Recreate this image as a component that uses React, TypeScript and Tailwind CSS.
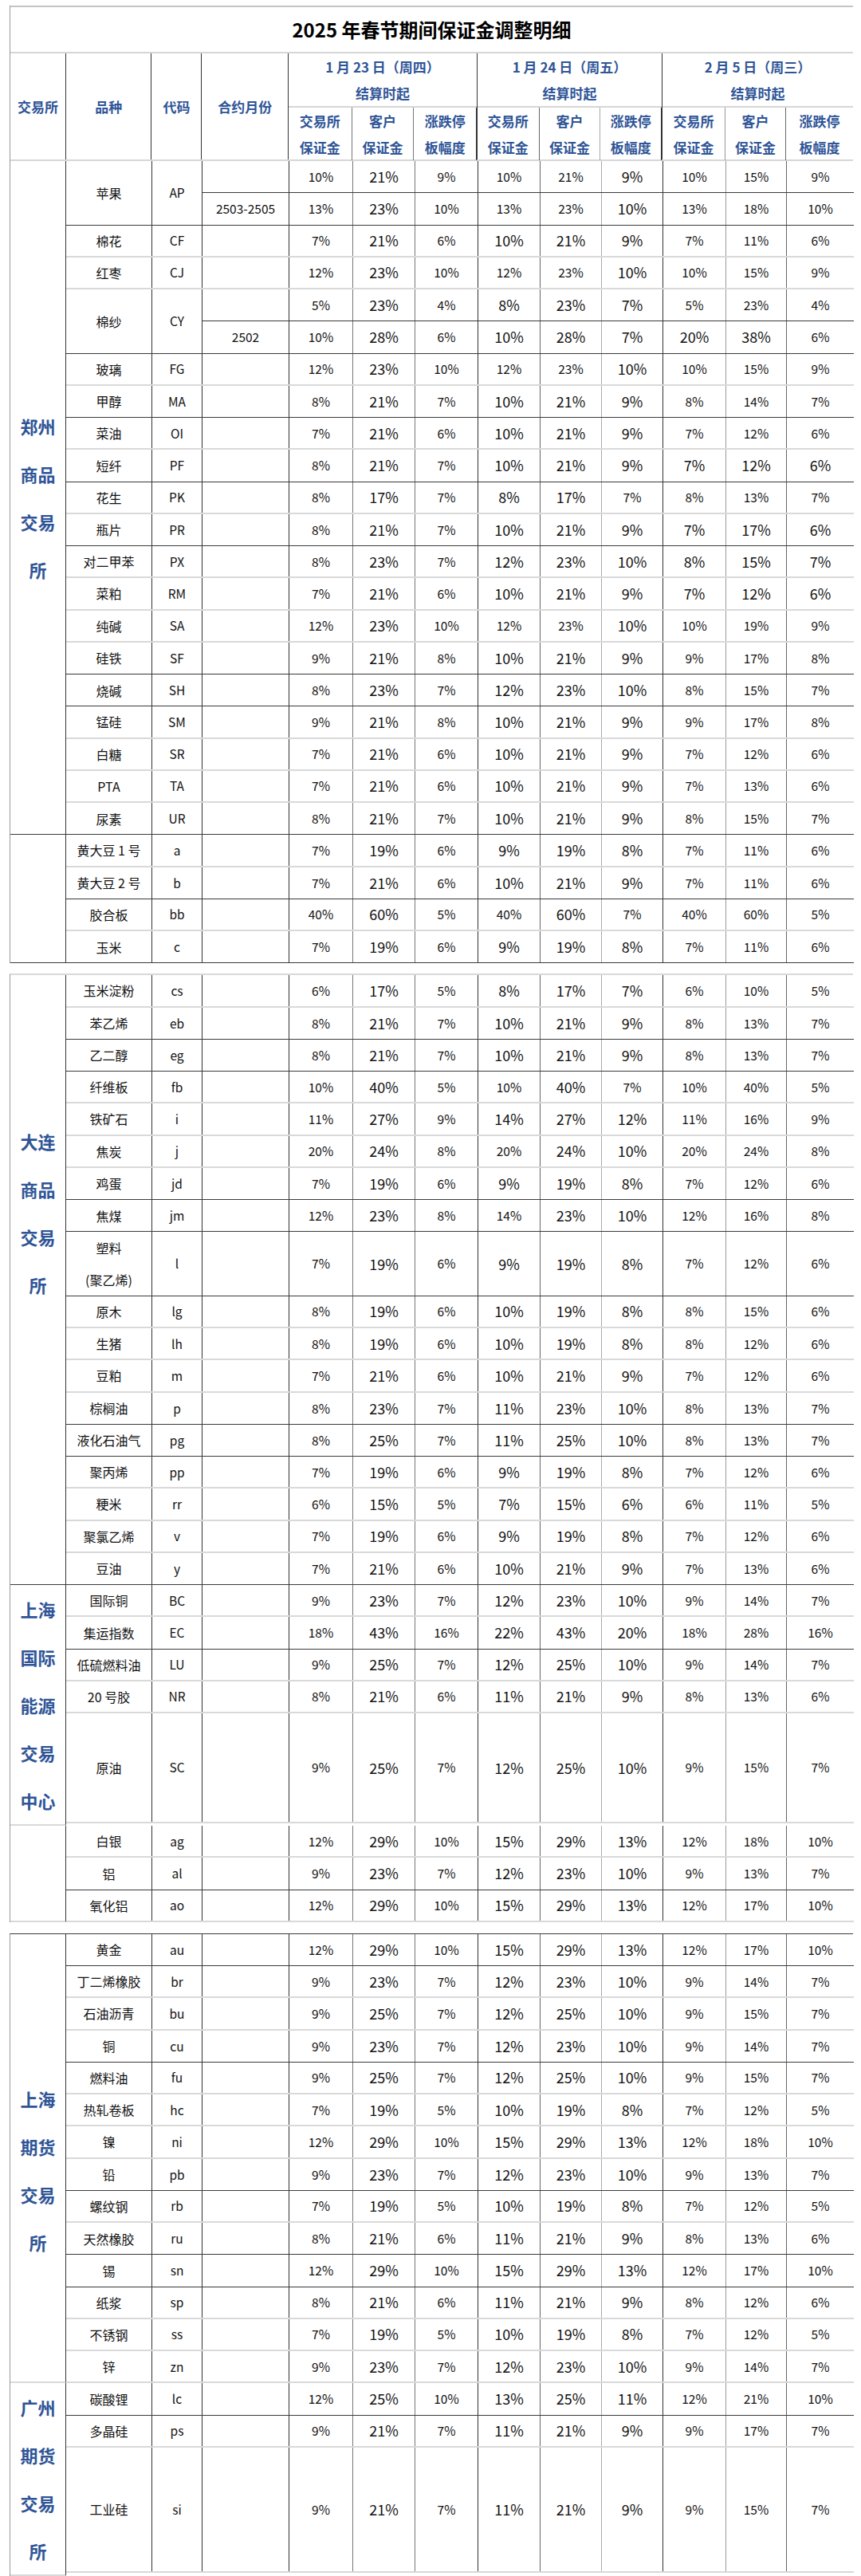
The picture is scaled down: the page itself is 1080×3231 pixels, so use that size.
import React from 'react';

type Line = 'd' | 'l';
type Sub = { month?: string; v: number[]; m?: string; line?: Line };
type Item = { name: string; code: string; subs: Sub[]; line: Line; h?: string };
type Section = { label: string[]; pad?: string; items: Item[] };

const DEF = 'sLsLLLsss';

const lineCls: Record<Line, string> = {
    d: 'border-b border-b-[#3a3a3a]',
    l: 'border-b-2 border-b-[#d9d9d9]',
};

// widths of the 9 value columns and the line on their right side
const valCols = [
    'w-[80px] border-r border-r-[#777]',
    'w-[78px] border-r border-r-[#777]',
    'w-[79px] border-r border-r-[#333]',
    'w-[78px] border-r border-r-[#666]',
    'w-[77px] border-r border-r-[#aaa]',
    'w-[77px] border-r border-r-[#333]',
    'w-[79px] border-r border-r-[#999]',
    'w-[76px] border-r border-r-[#666]',
    'w-[84px]',
];

const one = (name: string, code: string, v: number[], line: Line, m?: string): Item => ({
    name,
    code,
    subs: [{ v, m }],
    line,
});

const zhengzhou: Section = {
    label: ['郑州', '商品', '交易', '所'],
    items: [
        {
            name: '苹果',
            code: 'AP',
            line: 'd',
            h: 'h-[80.5px]',
            subs: [
                { v: [10, 21, 9, 10, 21, 9, 10, 15, 9], m: 'sLsssLsss', line: 'd' },
                { month: '2503-2505', v: [13, 23, 10, 13, 23, 10, 13, 18, 10], m: 'sLsssLsss' },
            ],
        },
        one('棉花', 'CF', [7, 21, 6, 10, 21, 9, 7, 11, 6], 'l'),
        one('红枣', 'CJ', [12, 23, 10, 12, 23, 10, 10, 15, 9], 'l', 'sLsssLsss'),
        {
            name: '棉纱',
            code: 'CY',
            line: 'd',
            h: 'h-[80.5px]',
            subs: [
                { v: [5, 23, 4, 8, 23, 7, 5, 23, 4], line: 'd' },
                { month: '2502', v: [10, 28, 6, 10, 28, 7, 20, 38, 6], m: 'sLsLLLLLs' },
            ],
        },
        one('玻璃', 'FG', [12, 23, 10, 12, 23, 10, 10, 15, 9], 'l', 'sLsssLsss'),
        one('甲醇', 'MA', [8, 21, 7, 10, 21, 9, 8, 14, 7], 'd'),
        one('菜油', 'OI', [7, 21, 6, 10, 21, 9, 7, 12, 6], 'l'),
        one('短纤', 'PF', [8, 21, 7, 10, 21, 9, 7, 12, 6], 'd', 'sLsLLLLLL'),
        one('花生', 'PK', [8, 17, 7, 8, 17, 7, 8, 13, 7], 'l', 'sLsLLssss'),
        one('瓶片', 'PR', [8, 21, 7, 10, 21, 9, 7, 17, 6], 'd', 'sLsLLLLLL'),
        one('对二甲苯', 'PX', [8, 23, 7, 12, 23, 10, 8, 15, 7], 'l', 'sLsLLLLLL'),
        one('菜粕', 'RM', [7, 21, 6, 10, 21, 9, 7, 12, 6], 'l', 'sLsLLLLLL'),
        one('纯碱', 'SA', [12, 23, 10, 12, 23, 10, 10, 19, 9], 'l', 'sLsssLsss'),
        one('硅铁', 'SF', [9, 21, 8, 10, 21, 9, 9, 17, 8], 'd'),
        one('烧碱', 'SH', [8, 23, 7, 12, 23, 10, 8, 15, 7], 'd'),
        one('锰硅', 'SM', [9, 21, 8, 10, 21, 9, 9, 17, 8], 'l'),
        one('白糖', 'SR', [7, 21, 6, 10, 21, 9, 7, 12, 6], 'l'),
        one('PTA', 'TA', [7, 21, 6, 10, 21, 9, 7, 13, 6], 'l'),
        one('尿素', 'UR', [8, 21, 7, 10, 21, 9, 8, 15, 7], 'd'),
    ],
};

const dalianTop: Section = {
    label: [],
    items: [
        one('黄大豆 1 号', 'a', [7, 19, 6, 9, 19, 8, 7, 11, 6], 'l'),
        one('黄大豆 2 号', 'b', [7, 21, 6, 10, 21, 9, 7, 11, 6], 'd'),
        one('胶合板', 'bb', [40, 60, 5, 40, 60, 7, 40, 60, 5], 'l', 'sLssLssss'),
        one('玉米', 'c', [7, 19, 6, 9, 19, 8, 7, 11, 6], 'd'),
    ],
};

const dalian: Section = {
    label: ['大连', '商品', '交易', '所'],
    pad: 'pb-[169px]',
    items: [
        one('玉米淀粉', 'cs', [6, 17, 5, 8, 17, 7, 6, 10, 5], 'l'),
        one('苯乙烯', 'eb', [8, 21, 7, 10, 21, 9, 8, 13, 7], 'd'),
        one('乙二醇', 'eg', [8, 21, 7, 10, 21, 9, 8, 13, 7], 'd'),
        one('纤维板', 'fb', [10, 40, 5, 10, 40, 7, 10, 40, 5], 'l', 'sLssLssss'),
        one('铁矿石', 'i', [11, 27, 9, 14, 27, 12, 11, 16, 9], 'l'),
        one('焦炭', 'j', [20, 24, 8, 20, 24, 10, 20, 24, 8], 'l', 'sLssLLsss'),
        one('鸡蛋', 'jd', [7, 19, 6, 9, 19, 8, 7, 12, 6], 'd'),
        one('焦煤', 'jm', [12, 23, 8, 14, 23, 10, 12, 16, 8], 'd', 'sLssLLsss'),
        { ...one('塑料\n(聚乙烯)', 'l', [7, 19, 6, 9, 19, 8, 7, 12, 6], 'd'), h: 'h-[80.5px]' },
        one('原木', 'lg', [8, 19, 6, 10, 19, 8, 8, 15, 6], 'l'),
        one('生猪', 'lh', [8, 19, 6, 10, 19, 8, 8, 12, 6], 'l'),
        one('豆粕', 'm', [7, 21, 6, 10, 21, 9, 7, 12, 6], 'l'),
        one('棕榈油', 'p', [8, 23, 7, 11, 23, 10, 8, 13, 7], 'd'),
        one('液化石油气', 'pg', [8, 25, 7, 11, 25, 10, 8, 13, 7], 'd'),
        one('聚丙烯', 'pp', [7, 19, 6, 9, 19, 8, 7, 12, 6], 'l'),
        one('粳米', 'rr', [6, 15, 5, 7, 15, 6, 6, 11, 5], 'l'),
        one('聚氯乙烯', 'v', [7, 19, 6, 9, 19, 8, 7, 12, 6], 'l'),
        one('豆油', 'y', [7, 21, 6, 10, 21, 9, 7, 13, 6], 'd'),
    ],
};

const ine: Section = {
    label: ['上海', '国际', '能源', '交易', '中心'],
    items: [
        one('国际铜', 'BC', [9, 23, 7, 12, 23, 10, 9, 14, 7], 'l'),
        one('集运指数', 'EC', [18, 43, 16, 22, 43, 20, 18, 28, 16], 'd'),
        one('低硫燃料油', 'LU', [9, 25, 7, 12, 25, 10, 9, 14, 7], 'l'),
        one('20 号胶', 'NR', [8, 21, 6, 11, 21, 9, 8, 13, 6], 'l'),
        { ...one('原油', 'SC', [9, 25, 7, 12, 25, 10, 9, 15, 7], 'l'), h: 'h-[138px]' },
    ],
};

const shfeTop: Section = {
    label: [],
    items: [
        one('白银', 'ag', [12, 29, 10, 15, 29, 13, 12, 18, 10], 'l'),
        one('铝', 'al', [9, 23, 7, 12, 23, 10, 9, 13, 7], 'd'),
        one('氧化铝', 'ao', [12, 29, 10, 15, 29, 13, 12, 17, 10], 'l'),
    ],
};

const shfe: Section = {
    label: ['上海', '期货', '交易', '所'],
    pad: 'pt-[31px]',
    items: [
        one('黄金', 'au', [12, 29, 10, 15, 29, 13, 12, 17, 10], 'd'),
        one('丁二烯橡胶', 'br', [9, 23, 7, 12, 23, 10, 9, 14, 7], 'l'),
        one('石油沥青', 'bu', [9, 25, 7, 12, 25, 10, 9, 15, 7], 'l'),
        one('铜', 'cu', [9, 23, 7, 12, 23, 10, 9, 14, 7], 'd'),
        one('燃料油', 'fu', [9, 25, 7, 12, 25, 10, 9, 15, 7], 'l'),
        one('热轧卷板', 'hc', [7, 19, 5, 10, 19, 8, 7, 12, 5], 'l'),
        one('镍', 'ni', [12, 29, 10, 15, 29, 13, 12, 18, 10], 'l'),
        one('铅', 'pb', [9, 23, 7, 12, 23, 10, 9, 13, 7], 'd'),
        one('螺纹钢', 'rb', [7, 19, 5, 10, 19, 8, 7, 12, 5], 'l'),
        one('天然橡胶', 'ru', [8, 21, 6, 11, 21, 9, 8, 13, 6], 'd'),
        one('锡', 'sn', [12, 29, 10, 15, 29, 13, 12, 17, 10], 'd'),
        one('纸浆', 'sp', [8, 21, 6, 11, 21, 9, 8, 12, 6], 'l'),
        one('不锈钢', 'ss', [7, 19, 5, 10, 19, 8, 7, 12, 5], 'l'),
        one('锌', 'zn', [9, 23, 7, 12, 23, 10, 9, 14, 7], 'l'),
    ],
};

const gfex: Section = {
    label: ['广州', '期货', '交易', '所'],
    items: [
        one('碳酸锂', 'lc', [12, 25, 10, 13, 25, 11, 12, 21, 10], 'd'),
        one('多晶硅', 'ps', [9, 21, 7, 11, 21, 9, 9, 17, 7], 'l'),
        { ...one('工业硅', 'si', [9, 21, 7, 11, 21, 9, 9, 15, 7], 'l'), h: 'h-[157px]' },
    ],
};

const dates = [
    { title: '1 月 23 日（周四）', w: 'w-[237px] border-r border-r-[#333]', cols: valCols.slice(0, 3) },
    { title: '1 月 24 日（周五）', w: 'w-[232px] border-r border-r-[#333]', cols: valCols.slice(3, 6) },
    { title: '2 月 5 日（周三）', w: 'w-[239px]', cols: ['w-[79px] border-r border-r-[#999]', 'w-[76px] border-r border-r-[#666]', 'w-[84px]'] },
];
const subHeads = [
    ['交易所', '保证金'],
    ['客户', '保证金'],
    ['涨跌停', '板幅度'],
];

const blue = 'text-[#2f5597] font-bold';

function SubRow({ sub, last }: { sub: Sub; last: boolean }) {
    const mask = sub.m || DEF;
    return (
        <div className={`flex flex-1 min-h-0 ${last ? '' : lineCls[sub.line || 'l']}`}>
            <div className="w-[109px] border-r border-r-[#333] flex items-center justify-center text-[15.5px]">
                {sub.month}
            </div>
            {sub.v.map((v, i) => (
                <div
                    key={i}
                    className={`${valCols[i]} flex items-center justify-center ${
                        mask[i] === 'L' ? 'text-[18px]' : 'text-[15.5px]'
                    }`}
                >
                    {v}%
                </div>
            ))}
        </div>
    );
}

function Group({ item }: { item: Item }) {
    return (
        <div className={`flex ${item.h || 'h-[40.25px]'} ${lineCls[item.line]}`}>
            <div className="w-[108px] border-r border-r-[#333] flex flex-col items-center justify-center text-[16px] leading-[40px] text-center">
                {item.name.split('\n').map((t) => (
                    <div key={t}>{t}</div>
                ))}
            </div>
            <div className="w-[63px] border-r border-r-[#333] flex items-center justify-center text-[15.5px]">
                {item.code}
            </div>
            <div className="flex-1 flex flex-col">
                {item.subs.map((s, i) => (
                    <SubRow key={i} sub={s} last={i === item.subs.length - 1} />
                ))}
            </div>
        </div>
    );
}

function Block({ sec }: { sec: Section }) {
    const lastLine = sec.items[sec.items.length - 1].line;
    return (
        <div className="flex">
            <div
                className={`w-[70px] shrink-0 border-r border-r-[#333] flex flex-col items-center justify-center ${
                    sec.pad || ''
                } ${lineCls[lastLine]}`}
            >
                {sec.label.map((t) => (
                    <div key={t} className={`${blue} text-[22px] leading-[60px]`}>
                        {t}
                    </div>
                ))}
            </div>
            <div className="flex-1 flex flex-col">
                {sec.items.map((it) => (
                    <Group key={it.code} item={it} />
                ))}
            </div>
        </div>
    );
}

function Header() {
    const left = [
        { t: '交易所', w: 'w-[70px]' },
        { t: '品种', w: 'w-[108px]' },
        { t: '代码', w: 'w-[63px]' },
        { t: '合约月份', w: 'w-[109px]' },
    ];
    return (
        <div className="flex h-[135px] border-b-2 border-b-[#d6d6d6]">
            {left.map((c) => (
                <div
                    key={c.t}
                    className={`${c.w} border-r border-r-[#333] flex items-center justify-center ${blue} text-[17px]`}
                >
                    {c.t}
                </div>
            ))}
            {dates.map((d) => (
                <div key={d.title} className={`${d.w} flex flex-col`}>
                    <div className={`h-[68px] border-b-2 border-b-[#d6d6d6] flex flex-col items-center justify-center ${blue} text-[17px] leading-[33px]`}>
                        <div>{d.title}</div>
                        <div>结算时起</div>
                    </div>
                    <div className="flex flex-1">
                        {d.cols.map((c, i) => (
                            <div
                                key={i}
                                className={`${c} flex flex-col items-center justify-center ${blue} text-[17px] leading-[33px]`}
                            >
                                <div>{subHeads[i][0]}</div>
                                <div>{subHeads[i][1]}</div>
                            </div>
                        ))}
                    </div>
                </div>
            ))}
        </div>
    );
}

export default function App() {
    return (
        <div className="w-[1080px] min-h-[3231px] bg-white pt-[7px] pl-[12px] text-[#111] font-['Noto_Sans_CJK_SC','Noto_Sans',sans-serif]">
            {/* page 1 */}
            <div className="w-[1058px] border-l border-l-[#999]">
                <div className="h-[60px] border-t-2 border-t-[#c4c4c4] border-b-2 border-b-[#d6d6d6] flex items-center justify-center text-[24px] font-bold text-black">
                    2025 年春节期间保证金调整明细
                </div>
                <Header />
                <Block sec={zhengzhou} />
                <Block sec={dalianTop} />
            </div>

            {/* page 2 */}
            <div className="mt-[13px] w-[1058px] border-l border-l-[#999] border-t-2 border-t-[#d9d9d9]">
                <Block sec={dalian} />
                <Block sec={ine} />
                <Block sec={shfeTop} />
            </div>

            {/* page 3 */}
            <div className="mt-[14px] w-[1058px] border-l border-l-[#999] border-t border-t-[#3a3a3a]">
                <Block sec={shfe} />
                <Block sec={gfex} />
            </div>
        </div>
    );
}
